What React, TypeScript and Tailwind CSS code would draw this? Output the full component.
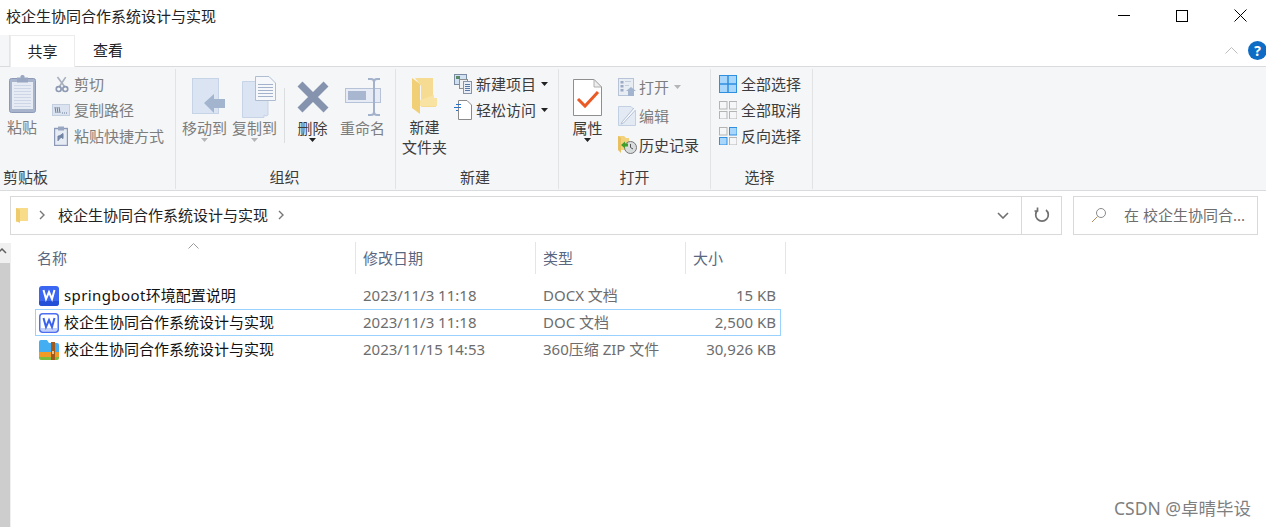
import React from "react";

const FONT = { fontFamily: '"Noto Sans","Noto Sans CJK SC",sans-serif' };

const Clipboard = () => (
  <svg width="28" height="38" viewBox="0 0 28 38">
    <rect x="0.5" y="3.5" width="26" height="34" rx="2" fill="#a8b4cc" stroke="#8c9ab8" />
    <rect x="3" y="7" width="21" height="27" fill="#e6ebf4" />
    {[10, 13, 16, 19, 22, 25, 28, 31].map((y) => (
      <line key={y} x1="5" x2="22" y1={y + 0.5} y2={y + 0.5} stroke="#cdd6e6" />
    ))}
    <rect x="8" y="2.5" width="11" height="5" fill="#9aa7c2" />
    <rect x="11.5" y="0" width="4" height="4" rx="1.5" fill="#9aa7c2" />
  </svg>
);
const Scissors = () => (
  <svg width="14" height="19" viewBox="0 0 17 20" fill="none">
    <path d="M3 1 L12 13 M13 1 L5 13" stroke="#a9b0bd" strokeWidth="2" />
    <circle cx="4.5" cy="15.5" r="3" stroke="#8e9ab3" strokeWidth="2" />
    <circle cx="12.5" cy="15.5" r="3" stroke="#8e9ab3" strokeWidth="2" />
  </svg>
);
const CopyPath = () => (
  <svg width="18" height="12" viewBox="0 0 18 12">
    <rect x="0.5" y="0.5" width="17" height="11" fill="#dbe3f0" stroke="#c3cede" />
    <path d="M3 3 L4 9 M5 3 L6 9 M7 3 L8 9" stroke="#6e7c99" strokeWidth="1" />
    <path d="M10 9 h1 M12 9 h1 M14 9 h1" stroke="#6e7c99" />
  </svg>
);
const PasteShortcut = () => (
  <svg width="14" height="20" viewBox="0 0 14 20">
    <rect x="0.5" y="2.5" width="13" height="17" fill="#e6ebf4" stroke="#8c9ab8" strokeWidth="1.4" />
    <rect x="4" y="0.5" width="6" height="4" fill="#9aa7c2" />
    <path d="M4 15 V10 H9 M9 7.5 V12.5 L5.5 10 Z" fill="#7d8eae" stroke="#6f80a1" />
  </svg>
);
const MoveTo = () => (
  <svg width="34" height="38" viewBox="0 0 34 38">
    <rect x="0.5" y="0.5" width="26" height="35" fill="#dbe4f2" stroke="#c7d3e6" />
    <path d="M12 25 L22 16 V21 H33 V30 H22 V35 Z" fill="#a3b4cf" />
  </svg>
);
const CopyTo = () => (
  <svg width="34" height="42" viewBox="0 0 34 42">
    <path d="M0.5 5.5 H26 V39 Q24 41 22 39 V41.5 H0.5 Z" fill="#dbe4f2" stroke="#c7d3e6" />
    <path d="M13.5 0.5 H27 L33.5 7 V24.5 H13.5 Z" fill="#f5f7fb" stroke="#afbdd3" />
    {[8, 11, 14, 17, 20].map((y) => (
      <line key={y} x1="16" x2="31" y1={y + 0.5} y2={y + 0.5} stroke="#a3b2cb" />
    ))}
  </svg>
);
const Delete = () => (
  <svg width="32" height="32" viewBox="0 0 32 32">
    <path d="M3 3 L29 29 M29 3 L3 29" stroke="#8593af" strokeWidth="7" />
  </svg>
);
const Rename = () => (
  <svg width="36" height="38" viewBox="0 0 36 38" fill="none">
    <rect x="0.5" y="10.5" width="35" height="14" fill="#e6ebf5" stroke="#b5c2d8" />
    <rect x="3" y="13" width="18" height="9" fill="#a8b6cf" />
    <path d="M23 1 H26 Q29 1 29 4 V34 Q29 37 32 37 H35 M35 1 H32 Q29 1 29 4 M29 34 Q29 37 26 37 H23" stroke="#a3b2cb" strokeWidth="2" />
  </svg>
);
const Folder = () => (
  <svg width="26" height="36" viewBox="0 0 26 36">
    <path d="M0 0 L8 6 V36 L0 30 Z" fill="#f0cf76" />
    <path d="M3 0 H21 V20 H24 V29 H9 V8 Z" fill="#f5dc92" />
    <path d="M8 28 L25 28 V20 L22 20 V17 L8 22 Z" fill="#f8e3a3" />
  </svg>
);
const NewItem = () => (
  <svg width="18" height="20" viewBox="0 0 18 20">
    <rect x="0.5" y="0.5" width="12" height="10" fill="#cfe1f2" stroke="#7b8ba1" />
    <rect x="2" y="2" width="4" height="3" fill="#5d8a66" />
    <rect x="5.5" y="5.5" width="8" height="9" fill="#f0f1f3" stroke="#8e8e8e" />
    <rect x="9.5" y="7.5" width="8" height="12" fill="#e9eef6" stroke="#8894a8" />
    {[10, 12, 14, 16].map((y) => (
      <line key={y} x1="11" x2="16" y1={y + 0.5} y2={y + 0.5} stroke="#5878a8" />
    ))}
  </svg>
);
const EasyAccess = () => (
  <svg width="18" height="20" viewBox="0 0 18 20" fill="none">
    <path d="M4.5 0.5 H13 L17.5 5 V19.5 H4.5 Z" fill="#fff" stroke="#8a8a8a" />
    <path d="M0 7.5 H7 M2 4.5 H7 M2 10.5 H4" stroke="#2673c9" strokeWidth="1.2" />
  </svg>
);
const Properties = () => (
  <svg width="29" height="37" viewBox="0 0 29 37" fill="none">
    <path d="M0.5 0.5 H21 L28.5 8 V36.5 H0.5 Z" fill="#fff" stroke="#8f8f8f" />
    <path d="M21 0.5 V8 H28.5 Z" fill="#eee" stroke="#b0b0b0" />
    <path d="M5 20 L12 27 L25 13" stroke="#ea5a26" strokeWidth="3" />
  </svg>
);
const OpenIcon = () => (
  <svg width="18" height="18" viewBox="0 0 18 18">
    <rect x="0.5" y="0.5" width="15" height="17" fill="#e8edf4" stroke="#b7c3d6" />
    {[3, 7, 11].map((y) => (
      <rect key={y} x="2.5" y={y} width="3" height="2.5" fill="#9aaac2" />
    ))}
    <path d="M7 3.5 H13 M7 7.5 H11" stroke="#c3cede" />
    <path d="M8 13 L13 9 L18 13 H16 V18 H10 V13 Z" fill="#a3b4cf" />
  </svg>
);
const EditIcon = () => (
  <svg width="18" height="20" viewBox="0 0 18 20" fill="none">
    <path d="M0.5 0.5 H13 L17.5 5 V19.5 H0.5 Z" fill="#e4eaf4" stroke="#c3cfe2" />
    <path d="M16 2 L4 16 L3 18 L5.5 17 L17.5 4" fill="#f8fafc" stroke="#b3c0d5" />
  </svg>
);
const HistoryIcon = () => (
  <svg width="19" height="19" viewBox="0 0 19 19">
    <path d="M0 1 H6 L8 3 H11 V15 H0 Z" fill="#f2d27b" />
    <path d="M0 1 L3 3 V18 L0 15 Z" fill="#e8c060" />
    <circle cx="12.5" cy="12.5" r="6" fill="#d9dcdd" stroke="#777" />
    <path d="M12.5 9 V12.5 L15 14" stroke="#555" fill="none" />
    <path d="M3 10 L7 6.5 V8.5 H10 V11.5 H7 V13.5 Z" fill="#3f9e2c" />
  </svg>
);
const Grid4 = ({ fills, strokes }: { fills: string[]; strokes: string[] }) => (
  <svg width="18" height="18" viewBox="0 0 18 18">
    {[
      [0, 0],
      [10, 0],
      [0, 10],
      [10, 10],
    ].map(([x, y], i) => (
      <rect key={i} x={x + 0.5} y={y + 0.5} width="7.5" height="7.5" fill={fills[i]} stroke={strokes[i]} />
    ))}
  </svg>
);
const B = "#2f8fe0";
const L = "#a9d6fb";
const G = "#b4b4b4";
const SelectAll = () => (
  <svg width="18" height="18" viewBox="0 0 18 18">
    <rect x="0.5" y="0.5" width="17" height="17" fill={L} stroke={B} />
    <path d="M9 0 V18 M0 9 H18" stroke={B} strokeWidth="1.5" />
  </svg>
);
const WordIcon = ({ outline }: { outline?: boolean }) =>
  outline ? (
    <svg width="20" height="20" viewBox="0 0 20 20">
      <rect x="0.75" y="0.75" width="18.5" height="18.5" rx="3" fill="#fff" stroke="#4d6ff0" strokeWidth="1.5" />
      <rect x="2" y="15" width="16" height="3" fill="#c3d0fa" />
      <path d="M4.5 5 L7 14 L10 7 L13 14 L15.5 5" fill="none" stroke="#3a62ec" strokeWidth="2" />
    </svg>
  ) : (
    <svg width="20" height="20" viewBox="0 0 20 20">
      <rect width="20" height="20" rx="3" fill="#3a66f2" />
      <path d="M0 15 H20 V17 A3 3 0 0 1 17 20 H3 A3 3 0 0 1 0 17 Z" fill="#2450d8" />
      <path d="M4.5 4 L7 13 L10 6 L13 13 L15.5 4" fill="none" stroke="#fff" strokeWidth="2" />
    </svg>
  );
const ZipIcon = () => (
  <svg width="20" height="20" viewBox="0 0 20 20">
    <path d="M0 2 A2 2 0 0 1 2 0 H8 L10 3 H18 A2 2 0 0 1 20 5 V13 H0 Z" fill="#43aef2" />
    <rect y="12" width="20" height="5" fill="#f29a26" />
    <path d="M0 17 H20 V18 A2 2 0 0 1 18 20 H2 A2 2 0 0 1 0 18 Z" fill="#7dbb3c" />
    <rect x="12" y="2" width="4" height="18" fill="#a05a1e" />
    <rect x="13" y="11" width="2" height="3" fill="#f2c27a" />
  </svg>
);

const Arrow = ({ color = "#333" }: { color?: string }) => (
  <svg width="7" height="4" viewBox="0 0 7 4" className="block">
    <path d="M0 0 H7 L3.5 4 Z" fill={color} />
  </svg>
);

const DIS = "text-[#7d7d7d]";
const ACT = "text-[#3c3c3c]";

const Large = ({
  icon,
  lines,
  disabled,
  arrow,
  w,
}: {
  icon: React.ReactNode;
  lines: string[];
  disabled?: boolean;
  arrow?: string;
  w: string;
}) => (
  <div className={`flex flex-col items-center ${w} ${disabled ? DIS : ACT}`}>
    <div className="flex items-center justify-center h-[42px]">{icon}</div>
    {lines.map((l) => (
      <div key={l} className="h-[20px] leading-[20px] whitespace-nowrap">
        {l}
      </div>
    ))}
    {arrow && (
      <div className="h-[4px]">
        <Arrow color={arrow} />
      </div>
    )}
  </div>
);

const Small = ({
  icon,
  text,
  disabled,
  arrow,
  h,
  iw = "w-[22px]",
}: {
  icon: React.ReactNode;
  text: string;
  disabled?: boolean;
  arrow?: string;
  h: string;
  iw?: string;
}) => (
  <div className={`flex items-center ${h} ${disabled ? DIS : ACT}`}>
    <div className={`${iw} flex items-center justify-start shrink-0`}>{icon}</div>
    <span className="whitespace-nowrap leading-[20px]">{text}</span>
    {arrow && (
      <span className="ml-[5px]">
        <Arrow color={arrow} />
      </span>
    )}
  </div>
);

const Group = ({
  w,
  label,
  children,
  lc,
}: {
  w: string;
  label: string;
  children: React.ReactNode;
  lc: string;
}) => (
  <div className={`${w} shrink-0 h-[120px] mt-[2px] border-r border-[#e2e3e4] flex flex-col`}>
    <div className="h-[97px] flex">{children}</div>
    <div className={`h-[21px] leading-[21px] text-[#3c3c3c] mt-[1px] ${lc}`}>{label}</div>
  </div>
);

const rows = [
  { icon: <WordIcon />, latin: "springboot", name: "环境配置说明", date: "2023/11/3 11:18", type: "DOCX 文档", size: "15 KB" },
  { icon: <WordIcon outline />, latin: "", name: "校企生协同合作系统设计与实现", date: "2023/11/3 11:18", type: "DOC 文档", size: "2,500 KB", sel: true },
  { icon: <ZipIcon />, latin: "", name: "校企生协同合作系统设计与实现", date: "2023/11/15 14:53", type: "360压缩 ZIP 文件", size: "30,926 KB" },
];

export default function App() {
  return (
    <div style={FONT} className="relative w-[1266px] h-[527px] overflow-hidden bg-white text-[15px] text-[#1a1a1a]">
      {/* title bar */}
      <div className="h-[33px] flex items-center justify-between">
        <div className="pl-[6px] text-[#222]">校企生协同合作系统设计与实现</div>
        <div className="flex items-center pr-[19px] gap-[46px] mt-[-2px]">
          <svg width="12" height="12" viewBox="0 0 12 12"><path d="M0 5.5 H12" stroke="#000" /></svg>
          <svg width="12" height="12" viewBox="0 0 12 12"><rect x="0.5" y="0.5" width="11" height="11" fill="none" stroke="#000" /></svg>
          <svg width="13" height="13" viewBox="0 0 13 13"><path d="M0.5 0.5 L12.5 12.5 M12.5 0.5 L0.5 12.5" stroke="#000" /></svg>
        </div>
      </div>
      {/* tabs */}
      <div className="h-[34px] flex border-b border-[#dadbdc] relative">
        <div className="w-[10px] mt-[2px] bg-[#f5f6f7] border-r border-[#e5e5e5]" />
        <div className="w-[65px] mt-[2px] border border-b-0 border-[#ececec] flex items-center justify-center text-[#222] bg-white mb-[-1px]">共享</div>
        <div className="w-[66px] mt-[2px] flex items-center justify-center text-[#222]">查看</div>
        <div className="ml-auto flex items-center gap-[10px] mr-[-1px] mt-[1px]">
          <svg width="13" height="7" viewBox="0 0 13 7" fill="none"><path d="M0.5 6.5 L6.5 0.5 L12.5 6.5" stroke="#bdbdbd" /></svg>
          <div className="w-[19px] h-[19px] rounded-full bg-[#0f6cc4] flex items-center justify-center text-white font-bold text-[14px]">?</div>
        </div>
      </div>
      {/* ribbon */}
      <div className="h-[124px] bg-[#f5f6f7] border-b border-[#dadbdc] flex">
        <Group w="w-[176px]" label="剪贴板" lc="pl-[3px]">
          <div className="w-[52px] pl-[7px] pt-[6px]">
            <div className="pl-[2px]"><Clipboard /></div>
            <div className={`${DIS} mt-[4px] leading-[20px]`}>粘贴</div>
          </div>
          <div className="pt-[2px]">
            <Small h="h-[26px]" icon={<span className="pl-[3px]"><Scissors /></span>} text="剪切" disabled />
            <Small h="h-[26px]" icon={<CopyPath />} text="复制路径" disabled />
            <Small h="h-[26px]" icon={<span className="pl-[2px]"><PasteShortcut /></span>} text="粘贴快捷方式" disabled />
          </div>
        </Group>
        <Group w="w-[220px]" label="组织" lc="text-center pr-[2px]">
          <div className="flex pl-[6px] pt-[7px]">
            <Large w="w-[45px]" icon={<span className="pl-[8px]"><MoveTo /></span>} lines={["移动到"]} disabled arrow="#b5b5b5" />
            <div className="w-[5px]" />
            <Large w="w-[45px]" icon={<span className="pl-[8px]"><CopyTo /></span>} lines={["复制到"]} disabled arrow="#b5b5b5" />
            <div className="w-px h-[55px] bg-[#dcdddf] ml-[7px] mt-[12px]" />
            <div className="w-[12px]" />
            <Large w="w-[31px]" icon={<Delete />} lines={["删除"]} arrow="#222" />
            <div className="w-[12px]" />
            <Large w="w-[45px]" icon={<Rename />} lines={["重命名"]} disabled />
          </div>
        </Group>
        <Group w="w-[163px]" label="新建" lc="text-center pr-[4px]">
          <div className="flex pl-[6px] pt-[2px]">
            <Large w="w-[45px] mt-[4px]" icon={<Folder />} lines={["新建", "文件夹"]} />
            <div className="pl-[7px]">
              <Small h="h-[26px]" icon={<NewItem />} text="新建项目" arrow="#222" />
              <Small h="h-[26px]" icon={<EasyAccess />} text="轻松访问" arrow="#222" />
            </div>
          </div>
        </Group>
        <Group w="w-[152px]" label="打开" lc="text-center">
          <div className="flex pl-[13px] pt-[2px]">
            <Large w="w-[31px] mt-[5px]" icon={<Properties />} lines={["属性"]} arrow="#222" />
            <div className="pl-[15px] pt-[1px]">
              <Small iw="w-[21px]" h="h-[29px]" icon={<OpenIcon />} text="打开" disabled arrow="#b5b5b5" />
              <Small iw="w-[21px]" h="h-[29px]" icon={<EditIcon />} text="编辑" disabled />
              <Small iw="w-[21px]" h="h-[29px]" icon={<HistoryIcon />} text="历史记录" />
            </div>
          </div>
        </Group>
        <Group w="w-[102px]" label="选择" lc="text-center pr-[4px]">
          <div className="pl-[8px] pt-[2px]">
            <Small h="h-[26px]" icon={<SelectAll />} text="全部选择" />
            <Small h="h-[26px]" icon={<Grid4 fills={["#f5f6f7", "#f5f6f7", "#f5f6f7", "#f5f6f7"]} strokes={[G, G, G, G]} />} text="全部取消" />
            <Small h="h-[26px]" icon={<Grid4 fills={["#f5f6f7", L, L, "#f5f6f7"]} strokes={[G, B, B, G]} />} text="反向选择" />
          </div>
        </Group>
      </div>
      {/* address row */}
      <div className="h-[50px] flex items-center pl-[10px] pr-[8px] pb-[2px]">
        <div className="w-[1052px] h-[39px] border border-[#d9d9d9] flex items-center">
          <svg width="12" height="16" viewBox="0 0 12 16" className="ml-[5px]">
            <path d="M0 1 H12 V14 H3 L0 15 Z" fill="#f8dc8a" />
            <path d="M0 1 L4 3 V16 L0 14 Z" fill="#eecb6c" />
          </svg>
          <svg width="7" height="10" viewBox="0 0 7 10" fill="none" className="ml-[11px]"><path d="M1 1 L5 5 L1 9" stroke="#777" strokeWidth="1.4" /></svg>
          <span className="ml-[12px] text-[#222]">校企生协同合作系统设计与实现</span>
          <svg width="7" height="10" viewBox="0 0 7 10" fill="none" className="ml-[10px]"><path d="M1 1 L5 5 L1 9" stroke="#777" strokeWidth="1.4" /></svg>
          <div className="ml-auto flex items-center h-full">
            <svg width="12" height="7" viewBox="0 0 12 7" fill="none" className="mr-[12px]"><path d="M1 1 L6 6 L11 1" stroke="#707070" strokeWidth="1.6" /></svg>
            <div className="w-[40px] h-full border-l border-[#d9d9d9] flex items-center justify-center">
              <svg width="16" height="16" viewBox="0 0 16 16" fill="none"><path d="M4 3 A6.3 6.3 0 1 0 12 3 M3.5 0.5 V4 H0.5" stroke="#707070" strokeWidth="1.7" /></svg>
            </div>
          </div>
        </div>
        <div className="ml-[11px] flex-1 h-[39px] border border-[#d9d9d9] flex items-center text-[#6d6d6d]">
          <svg width="16" height="16" viewBox="0 0 16 16" fill="none" className="ml-[17px]"><circle cx="10" cy="6" r="4.5" stroke="#8a8a8a" /><path d="M6.5 9.5 L1 15" stroke="#b08c5a" /></svg>
          <span className="ml-[17px] whitespace-nowrap">在 校企生协同合...</span>
        </div>
      </div>
      {/* main */}
      <div className="flex h-[292px]">
        <div className="w-[10px] bg-[#cdcdcd] mt-[2px] flex flex-col shrink-0">
          <div className="h-[20px] bg-[#f0f0f0] flex items-start">
            <svg width="10" height="10" viewBox="0 0 10 10" fill="none" className="mt-[5px]"><path d="M-2 5 L2 1 L6 5" stroke="#606060" strokeWidth="1.5" /></svg>
          </div>
        </div>
        <div className="w-px bg-[#f0f0f0] mt-[2px]" />
        <div className="flex-1 relative pl-[24px]">
          {/* header */}
          <div className="relative h-[39px] flex text-[#5b6780] pt-[1px]">
            <svg width="11" height="6" viewBox="0 0 11 6" fill="none" className="absolute left-[153px] top-[2px]"><path d="M0.5 5.5 L5.5 0.5 L10.5 5.5" stroke="#9a9a9a" /></svg>
            <div className="w-[321px] h-[32px] border-r border-[#e5e5e5] flex items-center pl-[2px]">名称</div>
            <div className="w-[180px] h-[32px] border-r border-[#e5e5e5] flex items-center pl-[7px]">修改日期</div>
            <div className="w-[150px] h-[32px] border-r border-[#e5e5e5] flex items-center pl-[7px]">类型</div>
            <div className="w-[100px] h-[32px] border-r border-[#e5e5e5] flex items-center pl-[7px]">大小</div>
          </div>
          <div className="mt-[-1px]">
            <div className="h-[3px]" />
            {rows.map((r) => (
              <div key={r.date + r.size} className={`h-[27px] w-[746px] flex items-center border ${r.sel ? "border-[#99d1ff]" : "border-transparent"}`}>
                <div className="w-[319px] flex items-center pl-[3px] text-[#111] whitespace-nowrap">
                  {r.icon}
                  <span className="ml-[5px]">
                    {r.latin && <span className="tracking-[0.4px]">{r.latin}</span>}
                    {r.name}
                  </span>
                </div>
                <div className="w-[180px] pl-[8px] text-[#6d6d6d] whitespace-nowrap">{r.date}</div>
                <div className="w-[150px] pl-[8px] text-[#6d6d6d] whitespace-nowrap">{r.type}</div>
                <div className="w-[91px] text-right text-[#6d6d6d] whitespace-nowrap">{r.size}</div>
              </div>
            ))}
          </div>
        </div>
      </div>
      <div className="absolute right-[15px] bottom-[8px] text-[17.5px] leading-[22px] text-[#7f7f7f]">CSDN @卓晴毕设</div>
    </div>
  );
}
